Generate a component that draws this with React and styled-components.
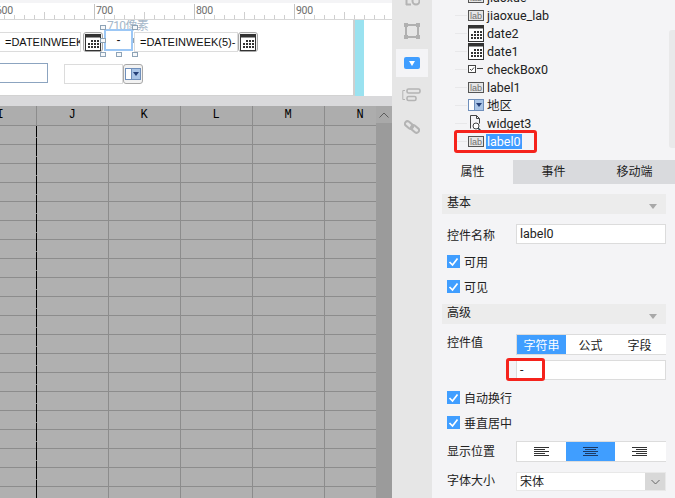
import React from "react";
import styled, { createGlobalStyle } from "styled-components";

const Global = createGlobalStyle`
  html, body { margin: 0; padding: 0; background: #f4f4f6; }
  body { font-family: Roboto, "Noto Sans CJK SC", sans-serif; font-size: 12px; color: #222; }
  * { box-sizing: border-box; }
`;

const Page = styled.div`
  display: flex;
  width: 675px;
  height: 498px;
  overflow: hidden;
`;

/* ---------- designer ---------- */
const Designer = styled.div`
  width: 392px;
  display: flex;
  flex-direction: column;
  background: #fff;
`;
const RulerSvg = styled.svg`
  display: block;
  flex: none;
`;
const CanvasRow = styled.div`
  flex: none;
  height: 76px;
  display: flex;
  background: #fff;
`;
const Canvas = styled.div`
  position: relative;
  width: 355px;
  border-right: 2px solid #cfcfcf;
  border-bottom: 1px solid #d2d2d2;
  overflow: hidden;
`;
const Guide = styled.div`
  width: 9px;
  background: #9ae2f0;
`;
const Band = styled.div`
  flex: none;
  height: 10px;
  background: #d9d9db;
`;
const Field = styled.div`
  position: absolute;
  left: ${(p) => p.$x}px;
  top: ${(p) => p.$y}px;
  width: ${(p) => p.$w}px;
  height: 20px;
  padding-left: 5px;
  background: #fff;
  border: 1px solid ${(p) => p.$line || "#dcdcdc"};
  font: 11px/18px "Liberation Sans", sans-serif;
  color: #111;
  white-space: nowrap;
  overflow: hidden;
`;
const PickerButton = styled.div`
  position: absolute;
  left: ${(p) => p.$x}px;
  top: ${(p) => p.$y}px;
  width: 20px;
  height: 20px;
  display: flex;
  align-items: center;
  justify-content: center;
  background: #f2f2f2;
  border: 1px solid #a8a8a8;
  border-radius: 3px;
`;
const SelectedLabel = styled.div`
  position: absolute;
  left: 104px;
  top: 9px;
  width: 29px;
  height: 22px;
  background: #fff;
  border: 2px solid #9cc7f5;
  display: flex;
  align-items: center;
  justify-content: center;
  font: 12px "Liberation Sans", sans-serif;
  color: #111;
`;
const Handle = styled.span`
  position: absolute;
  left: ${(p) => p.$x}px;
  top: ${(p) => p.$y}px;
  width: 6px;
  height: 5px;
  background: #f6f8fa;
  border: 1px solid #8ea3b6;
`;
const SizeHint = styled.span`
  position: absolute;
  left: 107px;
  top: -1px;
  font-size: 12px;
  line-height: 14px;
  letter-spacing: -0.6px;
  color: #a5b7c9;
  white-space: nowrap;
`;

/* ---------- sheet ---------- */
const SheetArea = styled.div`
  flex: 1;
  min-height: 0;
  display: flex;
`;
const SheetClip = styled.div`
  width: 376px;
  overflow: hidden;
  background: #b0b0b0;
`;
const SheetGrid = styled.div`
  display: grid;
  grid-template-columns: repeat(6, 72px);
  grid-template-rows: 20px;
  grid-auto-rows: 19px;
  width: 432px;
  margin-left: -35px;
`;
const HeadCell = styled.div`
  background: #adadad;
  border-right: 1px solid #8c8c8c;
  border-bottom: 1px solid #8c8c8c;
  padding-right: 1px;
  font: 12px/19px "Liberation Mono", monospace;
  color: #000;
  text-align: center;
`;
const Cell = styled.div`
  position: relative;
  background-color: #b0b0b0;
  border-right: 1px solid #8c8c8c;
  border-bottom: 1px solid #8c8c8c;
  ${(p) =>
    p.$split &&
    `&::after {
       content: "";
       position: absolute;
       top: 0;
       right: -1px;
       bottom: -1px;
       width: 1px;
       background: linear-gradient(to bottom, #000 0 11px, #8c8c8c 11px 12px, #000 12px);
     }`}
`;
const Scrollbar = styled.div`
  width: 16px;
  display: flex;
  flex-direction: column;
  background: #9b9b9b;
`;
const ScrollUp = styled.div`
  height: 17px;
  background: #a9a9a9;
  display: flex;
  align-items: center;
  justify-content: center;
`;

/* ---------- rail ---------- */
const Rail = styled.div`
  width: 40px;
  background: #e6e6e6;
  display: flex;
  flex-direction: column;
  align-items: center;
  gap: 4px;
`;
const RailItem = styled.div`
  flex: none;
  width: 32px;
  height: 28px;
  display: flex;
  align-items: center;
  justify-content: center;
  background: ${(p) => (p.$active ? "#f4f4f6" : "transparent")};
  &:first-child { margin-top: -15px; }
`;
const ComboChip = styled.div`
  width: 16px;
  height: 12px;
  border-radius: 2px;
  background: #409eff;
  display: flex;
  align-items: center;
  justify-content: center;
`;

/* ---------- right panel ---------- */
const Panel = styled.div`
  position: relative;
  width: 243px;
  background: #f4f4f6;
  display: flex;
  flex-direction: column;
`;
const Tree = styled.div`
  flex: none;
  height: 160px;
  overflow: hidden;
  position: relative;
`;
const TreeList = styled.div`
  margin-top: -12px;
`;
const TreeRow = styled.div`
  height: 18px;
  display: flex;
  align-items: center;
  padding-left: 23px;
`;
const TreeLine = styled.span`
  width: 12px;
  height: 1px;
  background: #e8e8ea;
  flex: none;
`;
const TreeIcon = styled.span`
  width: 17px;
  margin-right: 2px;
  flex: none;
  display: flex;
  align-items: center;
  justify-content: center;
`;
const TreeText = styled.span`
  font-size: 12.5px;
  line-height: 15px;
  padding: 0 1px;
  color: ${(p) => (p.$on ? "#fff" : "#222")};
  background: ${(p) => (p.$on ? "#3f9bff" : "transparent")};
`;
const TreeScroll = styled.div`
  position: absolute;
  right: 0;
  top: 30px;
  width: 6px;
  height: 118px;
  background: #e9e9ea;
  border-radius: 3px 0 0 3px;
`;
const RedBox = styled.div`
  position: absolute;
  left: ${(p) => p.$x}px;
  top: ${(p) => p.$y}px;
  width: ${(p) => p.$w}px;
  height: ${(p) => p.$h}px;
  border: 3px solid #f5231c;
  border-radius: 3px;
  pointer-events: none;
`;
const Tabs = styled.div`
  flex: none;
  display: flex;
  height: 24px;
`;
const Tab = styled.div`
  width: 82px;
  text-align: center;
  line-height: 24px;
  font-size: 12px;
  color: #222;
  background: ${(p) => (p.$on ? "#f4f4f6" : "#d9dadd")};
`;
const Form = styled.div`
  padding: 10px 9px 0 10px;
  display: flex;
  flex-direction: column;
`;
const SectionHead = styled.div`
  height: 20px;
  margin-top: ${(p) => p.$mt || 0}px;
  padding: 0 5px;
  background: #ececec;
  display: flex;
  align-items: center;
  justify-content: space-between;
  font-size: 12px;
  line-height: 16px;
  & > span { margin-top: -2px; }
  &::after {
    content: "";
    margin-top: 4px;
    margin-right: 4px;
    border-left: 4px solid transparent;
    border-right: 4px solid transparent;
    border-top: 5px solid #a8a8a8;
  }
`;
const FieldRow = styled.div`
  display: grid;
  grid-template-columns: 69px 150px;
  align-items: center;
  padding-left: 5px;
  margin-top: ${(p) => p.$mt}px;
`;
const FieldLabel = styled.span`
  font-size: 12px;
  line-height: 16px;
  margin-top: ${(p) => p.$dy || 0}px;
`;
const TextBox = styled.div`
  height: 20px;
  padding-left: 3px;
  background: #fff;
  border: 1px solid #dcdcdc;
  font-size: 12.5px;
  line-height: 18px;
  color: #222;
`;
const CheckRow = styled.div`
  display: flex;
  align-items: center;
  gap: 4px;
  height: 13px;
  padding-left: 5px;
  margin-top: ${(p) => p.$mt}px;
  font-size: 12px;
`;
const CheckBox = styled.span`
  width: 13px;
  height: 13px;
  background: #409eff;
  flex: none;
  display: flex;
  align-items: center;
  justify-content: center;
`;
const Segments = styled.div`
  display: flex;
  height: 21px;
  border: 1px solid #dcdcdc;
  border-right: none;
  background: #fff;
`;
const Segment = styled.div`
  width: 49px;
  display: flex;
  align-items: center;
  justify-content: center;
  font-size: 12px;
  color: ${(p) => (p.$on ? "#fff" : "#222")};
  background: ${(p) => (p.$on ? "#409eff" : "#fff")};
`;
const Select = styled.div`
  height: 19px;
  display: flex;
  background: #fff;
  border: 1px solid #e8e8e8;
  font-size: 12px;
  line-height: 18px;
`;
const SelectText = styled.span`
  flex: 1;
  padding-left: 3px;
`;
const SelectArrow = styled.span`
  width: 20px;
  background: #d8d8d8;
  display: flex;
  align-items: center;
  justify-content: center;
`;

/* ---------- drawings ---------- */
const Ruler = () => {
  const ticks = [];
  for (let x = 4; x < 392; x += 10) {
    const major = (x - 94) % 100 === 0;
    const mid = (x - 94) % 50 === 0;
    ticks.push(
      <line key={x} x1={x + 0.5} x2={x + 0.5} y1={major ? 4 : mid ? 12 : 15} y2={19} stroke={major ? "#c4c4c4" : "#cfcfcf"} />
    );
  }
  return (
    <RulerSvg width="392" height="20">
      <rect width="392" height="3" fill="#f4f4f6" />
      <rect y="3" width="392" height="17" fill="#fff" />
      {ticks}
      <line x1="0" x2="392" y1="19.5" y2="19.5" stroke="#d8d8d8" />
      {[[-4, "600"], [96, "700"], [196, "800"], [296, "900"]].map(([x, t]) => (
        <text key={t} x={x} y="14" fontFamily="Roboto, sans-serif" fontSize="10.5" letterSpacing="-0.3" fill="#6d6d6d">{t}</text>
      ))}
    </RulerSvg>
  );
};

const Calendar = ({ w = 16, h = 17 }) => (
  <svg width={w} height={h} viewBox="0 0 16 17">
    <rect x="0.5" y="0.5" width="15" height="16" fill="#fff" stroke="#333" />
    <rect x="0.5" y="0.5" width="15" height="3" fill="#333" />
    {[6, 9, 12].map((y) =>
      [3, 6, 9, 12].map((x) =>
        y === 6 && x === 3 ? null : <rect key={`${x}-${y}`} x={x} y={y} width="2" height="2" fill="#333" />
      )
    )}
  </svg>
);

const LabIcon = () => (
  <svg width="16" height="11" viewBox="0 0 16 11">
    <rect x="0.5" y="0.5" width="15" height="10" fill="#e6e6e6" stroke="#555" />
    <text x="8" y="8.5" textAnchor="middle" fontFamily="Liberation Sans, sans-serif" fontSize="9" fill="#6f6f6f">lab</text>
  </svg>
);

const CheckIcon = () => (
  <svg width="16" height="8" viewBox="0 0 16 8">
    <rect x="0.5" y="0.5" width="7" height="7" fill="#fff" stroke="#444" />
    <path d="M2 4l1.5 1.5L6 2.5" fill="none" stroke="#444" />
    <line x1="9" x2="15" y1="3.5" y2="3.5" stroke="#444" />
  </svg>
);

const ComboIcon = ({ w = 16 }) => (
  <svg width={w} height="12" viewBox="0 0 16 12">
    <rect x="0.5" y="0.5" width="15" height="11" fill="#fff" stroke="#6f8fbb" />
    <rect x="7" y="1" width="8" height="10" fill="#a9c4e6" />
    <line x1="6.5" x2="6.5" y1="0" y2="12" stroke="#6f8fbb" />
    <path d="M8 4h6l-3 4z" fill="#243f77" />
  </svg>
);

const DocIcon = () => (
  <svg width="15" height="16" viewBox="0 0 15 16">
    <path d="M2.5 13.5V.5h6l3 3v5M8.5.5v3h3" fill="none" stroke="#444" />
    <circle cx="8" cy="11" r="3" fill="#fff" stroke="#444" />
    <path d="M10 13l2.5 2.5" stroke="#2d4a55" strokeWidth="1.5" />
  </svg>
);

const Tick = () => (
  <svg width="11" height="10" viewBox="0 0 11 10">
    <path d="M1.5 5l3 3 5-6.5" fill="none" stroke="#fff" strokeWidth="1.7" />
  </svg>
);

const AlignIcon = ({ mode, color }) => {
  const lines = [15, 11, 15, 11, 15];
  return (
    <svg width="15" height="11" viewBox="0 0 15 11">
      {lines.map((w, i) => {
        const x = mode === "left" ? 0 : mode === "right" ? 15 - w : (15 - w) / 2;
        return <line key={i} x1={x} x2={x + w} y1={i * 2 + 1.5} y2={i * 2 + 1.5} stroke={color} />;
      })}
    </svg>
  );
};

const treeItems = [
  ["lab", "jiaoxue"],
  ["lab", "jiaoxue_lab"],
  ["cal", "date2"],
  ["cal", "date1"],
  ["chk", "checkBox0"],
  ["lab", "label1"],
  ["combo", "地区"],
  ["doc", "widget3"],
  ["lab", "label0", true],
];

const iconFor = (k) =>
  k === "lab" ? <LabIcon /> : k === "cal" ? <Calendar /> : k === "chk" ? <CheckIcon /> : k === "combo" ? <ComboIcon /> : <DocIcon />;

const columns = ["I", "J", "K", "L", "M", "N"];
const handles = [
  [100, 5], [132, 5], [100, 18], [133, 18], [100, 32], [116, 32], [132, 32],
];

export default function App() {
  return (
    <Page>
      <Global />
      <Designer>
        <Ruler />
        <CanvasRow>
          <Canvas>
            <SizeHint>710像素</SizeHint>
            <Field $x={-1} $y={12} $w={82}>=DATEINWEEK(5)-</Field>
            <PickerButton $x={83} $y={12}><Calendar /></PickerButton>
            <SelectedLabel>-</SelectedLabel>
            {handles.map(([x, y]) => <Handle key={`${x}-${y}`} $x={x} $y={y} />)}
            <Field $x={134} $y={12} $w={104}>=DATEINWEEK(5)-</Field>
            <PickerButton $x={238} $y={12}><Calendar /></PickerButton>
            <Field $x={-2} $y={43} $w={50} $line="#8ca4c0" />
            <Field $x={64} $y={44} $w={59} />
            <PickerButton $x={123} $y={44}><ComboIcon /></PickerButton>
          </Canvas>
          <Guide />
        </CanvasRow>
        <Band />
        <SheetArea>
          <SheetClip>
            <SheetGrid>
              {columns.map((c) => <HeadCell key={c}>{c}</HeadCell>)}
              {Array.from({ length: 21 * 6 }, (_, i) => <Cell key={i} $split={i % 6 === 0} />)}
            </SheetGrid>
          </SheetClip>
          <Scrollbar>
            <ScrollUp>
              <svg width="10" height="6" viewBox="0 0 10 6">
                <path d="M.5 5.5L5 1l4.5 4.5" fill="none" stroke="#5c5c5c" />
              </svg>
            </ScrollUp>
          </Scrollbar>
        </SheetArea>
      </Designer>

      <Rail>
        <RailItem>
          <svg width="15" height="14" viewBox="0 0 15 14">
            <path d="M1 1.5h5M1 7h4M1 12.5h5M1.5 1v12" stroke="#b4b4b4" strokeWidth="2" fill="none" />
            <circle cx="11" cy="9" r="3.5" fill="none" stroke="#b4b4b4" strokeWidth="2" />
          </svg>
        </RailItem>
        <RailItem>
          <svg width="16" height="16" viewBox="0 0 16 16">
            <rect x="2" y="2" width="12" height="12" fill="none" stroke="#b0b0b0" strokeWidth="2" />
            {[[0, 0], [12, 0], [0, 12], [12, 12]].map(([x, y]) => (
              <rect key={`${x}${y}`} x={x} y={y} width="4" height="4" fill="#b0b0b0" />
            ))}
          </svg>
        </RailItem>
        <RailItem $active>
          <ComboChip>
            <svg width="6" height="5" viewBox="0 0 6 5"><path d="M0 0h6L3 5z" fill="#fff" /></svg>
          </ComboChip>
        </RailItem>
        <RailItem>
          <svg width="20" height="14" viewBox="0 0 20 14">
            <path d="M3 2.5H.8v9H3" fill="none" stroke="#b4b4b4" />
            <rect x="5" y="1" width="13" height="4" rx="1.5" fill="none" stroke="#b4b4b4" strokeWidth="1.6" />
            <rect x="5" y="8.5" width="9" height="4" rx="1.5" fill="none" stroke="#b4b4b4" strokeWidth="1.6" />
          </svg>
        </RailItem>
        <RailItem>
          <svg width="16" height="16" viewBox="0 0 16 16">
            <g fill="none" stroke="#b4b4b4" strokeWidth="2">
              <rect x="0.5" y="3.5" width="9" height="5" rx="2.5" transform="rotate(40 5 6)" />
              <rect x="6.5" y="7.5" width="9" height="5" rx="2.5" transform="rotate(40 11 10)" />
            </g>
          </svg>
        </RailItem>
      </Rail>

      <Panel>
        <Tree>
          <TreeList>
            {treeItems.map(([k, t, on]) => (
              <TreeRow key={t}>
                <TreeLine />
                <TreeIcon>{iconFor(k)}</TreeIcon>
                <TreeText $on={on}>{t}</TreeText>
              </TreeRow>
            ))}
          </TreeList>
          <TreeScroll />
        </Tree>
        <Tabs>
          <Tab $on>属性</Tab>
          <Tab>事件</Tab>
          <Tab>移动端</Tab>
        </Tabs>
        <Form>
          <SectionHead><span>基本</span></SectionHead>
          <FieldRow $mt={10}>
            <FieldLabel $dy={3}>控件名称</FieldLabel>
            <TextBox>label0</TextBox>
          </FieldRow>
          <CheckRow $mt={11}><CheckBox><Tick /></CheckBox>可用</CheckRow>
          <CheckRow $mt={12}><CheckBox><Tick /></CheckBox>可见</CheckRow>
          <SectionHead $mt={11}><span>高级</span></SectionHead>
          <FieldRow $mt={10}>
            <FieldLabel $dy={-3}>控件值</FieldLabel>
            <Segments>
              <Segment $on>字符串</Segment>
              <Segment>公式</Segment>
              <Segment>字段</Segment>
            </Segments>
          </FieldRow>
          <FieldRow $mt={5}>
            <span />
            <TextBox>-</TextBox>
          </FieldRow>
          <CheckRow $mt={11}><CheckBox><Tick /></CheckBox>自动换行</CheckRow>
          <CheckRow $mt={12}><CheckBox><Tick /></CheckBox>垂直居中</CheckRow>
          <FieldRow $mt={12}>
            <FieldLabel>显示位置</FieldLabel>
            <Segments>
              <Segment><AlignIcon mode="left" color="#333" /></Segment>
              <Segment $on><AlignIcon mode="center" color="#1b3a66" /></Segment>
              <Segment><AlignIcon mode="right" color="#333" /></Segment>
            </Segments>
          </FieldRow>
          <FieldRow $mt={10}>
            <FieldLabel $dy={-2}>字体大小</FieldLabel>
            <Select>
              <SelectText>宋体</SelectText>
              <SelectArrow>
                <svg width="9" height="6" viewBox="0 0 9 6"><path d="M.5 1l4 4 4-4" fill="none" stroke="#666" /></svg>
              </SelectArrow>
            </Select>
          </FieldRow>
        </Form>
        <RedBox $x={22} $y={130} $w={83} $h={23} />
        <RedBox $x={74} $y={358} $w={39} $h={23} />
      </Panel>
    </Page>
  );
}
